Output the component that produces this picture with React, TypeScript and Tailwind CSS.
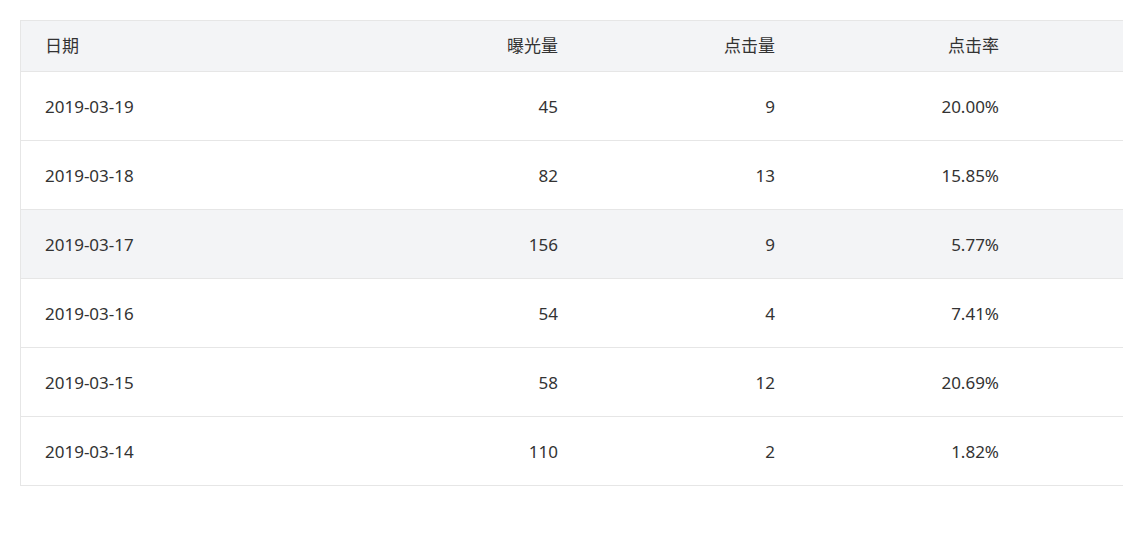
const rows = [
  { date: '2019-03-19', views: 45, clicks: 9, rate: '20.00%' },
  { date: '2019-03-18', views: 82, clicks: 13, rate: '15.85%' },
  { date: '2019-03-17', views: 156, clicks: 9, rate: '5.77%', hover: true },
  { date: '2019-03-16', views: 54, clicks: 4, rate: '7.41%' },
  { date: '2019-03-15', views: 58, clicks: 12, rate: '20.69%' },
  { date: '2019-03-14', views: 110, clicks: 2, rate: '1.82%' },
];

const cols = 'grid grid-cols-[344px_217px_217px_224px_1fr]';

export default function App() {
  return (
    <div
      className="w-[1123px] h-[535px] overflow-hidden bg-white p-5 text-[17px] text-[#333]"
      style={{ fontFamily: '"Noto Sans", "Noto Sans CJK SC", sans-serif' }}
    >
      <div className="w-[1140px] border border-[#e6e6e6]">
        {/* header */}
        <div className={`${cols} h-[51px] items-center bg-[#f3f4f6] border-b border-[#e6e6e6]`}>
          <div className="px-6">日期</div>
          <div className="px-6 text-right">曝光量</div>
          <div className="px-6 text-right">点击量</div>
          <div className="px-6 text-right">点击率</div>
          <div />
        </div>
        {rows.map((r, i) => (
          <div
            key={r.date}
            className={`${cols} items-center ${i < rows.length - 1 ? 'h-[69px] border-b border-[#e6e6e6]' : 'h-[68px]'} ${r.hover ? 'bg-[#f3f4f6]' : 'bg-white'}`}
          >
            <div className="px-6 pt-px">{r.date}</div>
            <div className="px-6 pt-px text-right">{r.views}</div>
            <div className="px-6 pt-px text-right">{r.clicks}</div>
            <div className="px-6 pt-px text-right">{r.rate}</div>
            <div />
          </div>
        ))}
      </div>
    </div>
  );
}
